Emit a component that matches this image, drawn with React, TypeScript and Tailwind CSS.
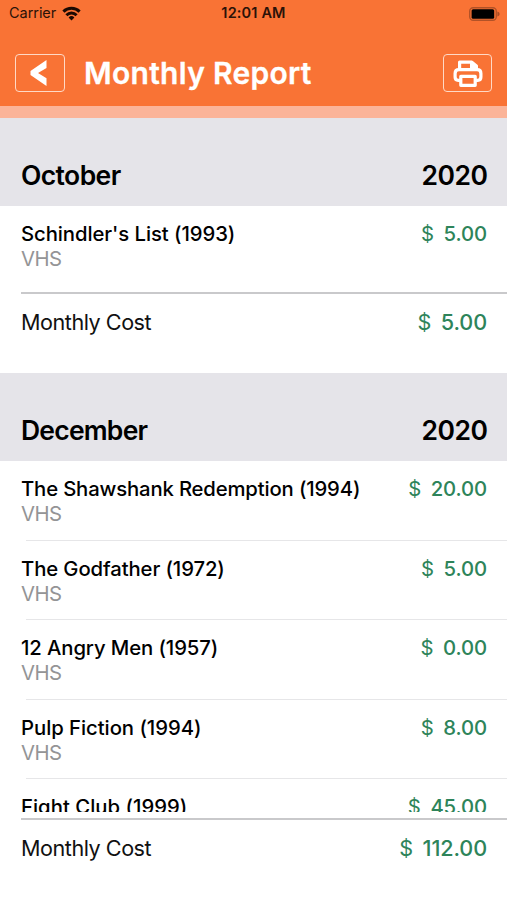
type Movie = { title: string; tracking: string; price: string; format?: string };

const october: Movie[] = [
  { title: "Schindler's List (1993)", tracking: 'tracking-[-0.07px]', price: '5.00', format: 'VHS' },
];

const december: Movie[] = [
  { title: 'The Shawshank Redemption (1994)', tracking: 'tracking-[-0.15px]', price: '20.00', format: 'VHS' },
  { title: 'The Godfather (1972)', tracking: 'tracking-[-0.1px]', price: '5.00', format: 'VHS' },
  { title: '12 Angry Men (1957)', tracking: 'tracking-[-0.1px]', price: '0.00', format: 'VHS' },
  { title: 'Pulp Fiction (1994)', tracking: 'tracking-[-0.04px]', price: '8.00', format: 'VHS' },
  { title: 'Fight Club (1999)', tracking: 'tracking-[0.02px]', price: '45.00' },
];

function StatusBar() {
  return (
    <div className="grid h-[27px] grid-cols-3 items-center pr-[7px] pl-[9px] text-[14.5px] leading-none text-[#2b1208]">
      <div className="flex items-center gap-[6px]">
        <span className="tracking-[-0.05px]">Carrier</span>
        <svg width="19" height="15" viewBox="0 0 19 15" fill="none" stroke="#1c0a02" strokeWidth="3">
          <path d="M1.4 5.6a11.6 11.6 0 0 1 16.2 0" />
          <path d="M4.4 9.2a7.3 7.3 0 0 1 10.2 0" />
          <path d="M9.5 14.4 6.6 11.5a4.2 4.2 0 0 1 5.8 0Z" fill="#1c0a02" stroke="none" />
        </svg>
      </div>
      <span className="-ml-[2px] justify-self-center text-[14.5px] font-semibold tracking-[0.15px]">12:01 AM</span>
      <svg className="justify-self-end" width="31" height="14" viewBox="0 0 31 14">
        <rect x="0.7" y="0.7" width="26.6" height="12.6" rx="3.5" fill="none" stroke="#b25227" strokeWidth="1.4" />
        <rect x="2.6" y="2.3" width="22.6" height="9.4" rx="1.5" fill="#000" />
        <path d="M28.4 4.5c1.5.4 2.2 1.4 2.2 2.5s-.7 2.1-2.2 2.5Z" fill="#a84d25" />
      </svg>
    </div>
  );
}

function Header() {
  return (
    <header className="h-[118px] border-b-[12px] border-[#fbb499] bg-[#f97335]">
      <StatusBar />
      <div className="flex items-center px-[15px] pt-[27px]">
        <button className="flex h-[38px] w-[50px] items-center justify-center rounded-[4px] border-[1.5px] border-[#ffd9c6]">
          <svg className="-ml-[3px]" width="17" height="26" viewBox="0 0 17 26" fill="#fff">
            <path d="M16.5 0v8L8 13l8.5 5.2V26L.5 15v-4Z" />
          </svg>
        </button>
        <h1 className="ml-[19px] text-[30px] leading-[36px] font-semibold tracking-[0.29px] whitespace-nowrap text-white [-webkit-text-stroke:0.3px_white]">
          Monthly Report
        </h1>
        <button className="ml-auto flex h-[38px] w-[49px] items-center justify-center rounded-[4px] border-[1.5px] border-[#ffd9c6]">
          <svg width="30" height="27" viewBox="0 0 30 27" fill="none" stroke="#fff" strokeWidth="3.2" strokeLinejoin="round">
            <path d="M6.6 9.5V2.1h12.2l4.6 3.9v3.5" />
            <path d="M8 20.3H5.2Q2.1 20.3 2.1 17v-3.600q0-3.800 3.800-3.800h18.200q3.800 0 3.800 3.800V17q0 3.300-3.100 3.300H22" />
            <path d="M7.800 16.300h14.400v9H7.800Z" />
            <path d="M17 1.500h2.500L24 6v2h-7Z" fill="#fff" stroke="none" />
          </svg>
        </button>
      </div>
    </header>
  );
}

function MonthHeader({ month, tracking }: { month: string; tracking: string }) {
  return (
    <div className="flex h-[88px] shrink-0 justify-between bg-[#e5e4e9] pt-[41px] pr-[20px] pl-[21px] text-[26.5px] leading-[32px] font-semibold text-black">
      <span className={tracking}>{month}</span>
      <span className="-mr-[0.5px] tracking-[-0.5px]">2020</span>
    </div>
  );
}

function Price({ value }: { value: string }) {
  return (
    <span className="flex gap-[11px] text-[#2e845a]">
      <span className="-mr-px tracking-[-0.5px]">$</span>
      <span className="font-medium tracking-[-0.1px]">{value}</span>
    </span>
  );
}

function MovieRow({ movie }: { movie: Movie }) {
  return (
    <li className="flex h-[79.5px] shrink-0 justify-between pt-[15px] pr-[20px] pl-[21px] text-[20.3px] leading-[26px]">
      <div>
        <div className={`font-medium whitespace-nowrap text-black ${movie.tracking}`}>{movie.title}</div>
        {movie.format && <div className="-mt-px tracking-[-0.5px] text-[#949496]">{movie.format}</div>}
      </div>
      <Price value={movie.price} />
    </li>
  );
}

function Total({ value }: { value: string }) {
  return (
    <div className="ml-[21px] flex h-[81.5px] shrink-0 justify-between border-t-2 border-[#c9c9cb] pt-[14px] pr-[20px] text-[21.6px] leading-[28px] text-[#111]">
      <span className="tracking-[-0.47px]">Monthly Cost</span>
      <Price value={value} />
    </div>
  );
}

export default function App() {
  return (
    <div className="flex h-[900px] w-[507px] flex-col overflow-hidden bg-white font-['Inter','Liberation_Sans',sans-serif]">
      <Header />
      <section className="flex h-[255px] shrink-0 flex-col">
        <MonthHeader month="October" tracking="tracking-[-0.6px]" />
        <ul className="h-[86px] shrink-0">
          {october.map((m) => (
            <MovieRow key={m.title} movie={m} />
          ))}
        </ul>
        <Total value="5.00" />
      </section>
      <section className="flex flex-col">
        <MonthHeader month="December" tracking="tracking-[-0.78px]" />
        <ul className="mb-[6px] h-[351px] shrink-0 overflow-hidden">
          {december.map((m, i) => (
            <div key={m.title}>
              {i > 0 && <div className="-mt-px ml-[26px] h-px bg-[#e6e6e8]" />}
              <MovieRow movie={m} />
            </div>
          ))}
        </ul>
        <Total value="112.00" />
      </section>
    </div>
  );
}
